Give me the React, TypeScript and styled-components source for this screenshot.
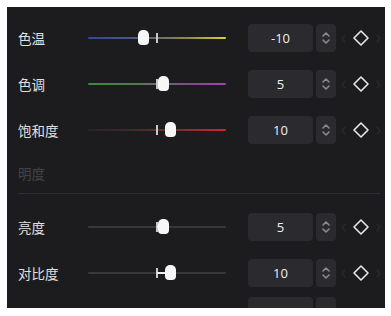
import styled, { createGlobalStyle } from "styled-components";

const GlobalStyle = createGlobalStyle`
    html, body {
        margin: 0;
        background: #ffffff;
    }
    body {
        font-family: "Noto Sans CJK SC", "Noto Sans", sans-serif;
    }
`;

const Panel = styled.div`
    margin: 7px 0 0 7px;
    width: 378px;
    height: 301px;
    background-color: #1c1c1e;
    overflow: hidden;
    padding: 8px 0 0 11px;
    box-sizing: border-box;
`;

const Row = styled.div`
    height: 46px;
    display: flex;
    align-items: center;
`;

const Label = styled.div`
    width: 70px;
    font-size: 13.5px;
    color: #e0e0e0;
    white-space: nowrap;
`;

const Track = styled.div<{ $bg: string }>`
    position: relative;
    width: 138px;
    height: 2px;
    border-radius: 1px;
    background: ${(p) => p.$bg};
`;

const Tick = styled.div`
    position: absolute;
    left: 68px;
    top: -4px;
    width: 2px;
    height: 10px;
    background: #c8c8c8;
`;

const Fill = styled.div`
    position: absolute;
    top: 0;
    height: 2px;
    background: #f0f0f0;
`;

const Thumb = styled.div`
    position: absolute;
    top: -7px;
    width: 11px;
    height: 15px;
    margin-left: -5px;
    border-radius: 5px 5px 4px 4px;
    background: #f7f7f7;
`;

const NumberBox = styled.div`
    margin-left: 22px;
    width: 65px;
    height: 28px;
    border-radius: 4px;
    background: #2b2b2f;
    color: #f0f0f0;
    font-family: "Open Sans", "Noto Sans", sans-serif;
    font-size: 13px;
    display: flex;
    align-items: center;
    justify-content: center;
`;

const Stepper = styled.div`
    margin-left: 3px;
    width: 20px;
    height: 28px;
    border-radius: 4px;
    background: #2b2b2f;
    display: flex;
    align-items: center;
    justify-content: center;
`;

const KeyGroup = styled.div`
    margin-left: 5px;
    width: 40px;
    display: flex;
    align-items: center;
    justify-content: space-between;
`;

const SectionTitle = styled.div`
    height: 40px;
    display: flex;
    align-items: center;
    font-size: 13.5px;
    color: #444446;
`;

const Divider = styled.div`
    height: 1px;
    margin: 0 5px 10px 0;
    background: #2c2f35;
`;

const PeekRow = styled.div`
    margin-top: 1px;
    padding-left: 208px;
    display: flex;
`;

const StepIcon = () => (
    <svg width="10" height="16" viewBox="0 0 10 16" fill="none" stroke="#8a8a8e" strokeWidth="1.6" strokeLinecap="round" strokeLinejoin="round">
        <path d="M2 6 L5 3 L8 6" />
        <path d="M2 10 L5 13 L8 10" />
    </svg>
);

const Chevron = ({ dir }: { dir: "left" | "right" }) => (
    <svg width="5" height="9" viewBox="0 0 5 9" fill="none" stroke="#2a2a2d" strokeWidth="1.2" strokeLinecap="round">
        {dir === "left" ? <path d="M4 1 L1 4.5 L4 8" /> : <path d="M1 1 L4 4.5 L1 8" />}
    </svg>
);

const Diamond = () => (
    <svg width="18" height="18" viewBox="0 0 18 18" fill="none" stroke="#e6e6e6" strokeWidth="1.6" strokeLinejoin="round">
        <path d="M9 2 L16 9 L9 16 L2 9 Z" />
    </svg>
);

type Param = {
    label: string;
    value: string;
    pos: number;
    track: string;
    fill?: boolean;
};

const grayTrack = "#38383a";

const colorParams: Param[] = [
    { label: "色温", value: "-10", pos: 55, track: "linear-gradient(90deg, #34468e 0%, #4a5688 30%, #6c6c6c 50%, #8f8a50 72%, #ddd02c 100%)" },
    { label: "色调", value: "5", pos: 75, track: "linear-gradient(90deg, #3e8a3a 0%, #4e7a4a 30%, #6c6c6c 50%, #7a4e86 72%, #9a46b0 100%)" },
    { label: "饱和度", value: "10", pos: 82, track: "linear-gradient(90deg, #262628 0%, #3a2a2c 30%, #5a3032 50%, #8a2c30 72%, #c8282c 100%)" },
];

const lightParams: Param[] = [
    { label: "亮度", value: "5", pos: 75, track: grayTrack, fill: true },
    { label: "对比度", value: "10", pos: 82, track: grayTrack, fill: true },
];

const SliderRow = ({ p }: { p: Param }) => (
    <Row>
        <Label>{p.label}</Label>
        <Track $bg={p.track}>
            <Tick />
            {p.fill && (
                <Fill style={{ left: Math.min(p.pos, 69), width: Math.abs(p.pos - 69) }} />
            )}
            <Thumb style={{ left: p.pos }} />
        </Track>
        <NumberBox>{p.value}</NumberBox>
        <Stepper>
            <StepIcon />
        </Stepper>
        <KeyGroup>
            <Chevron dir="left" />
            <Diamond />
            <Chevron dir="right" />
        </KeyGroup>
    </Row>
);

export default function App() {
    return (
        <>
            <GlobalStyle />
            <Panel>
                {colorParams.map((p) => (
                    <SliderRow key={p.label} p={p} />
                ))}
                <SectionTitle>明度</SectionTitle>
                <Divider />
                {lightParams.map((p) => (
                    <SliderRow key={p.label} p={p} />
                ))}
                <PeekRow>
                    <NumberBox />
                    <Stepper />
                </PeekRow>
            </Panel>
        </>
    );
}
